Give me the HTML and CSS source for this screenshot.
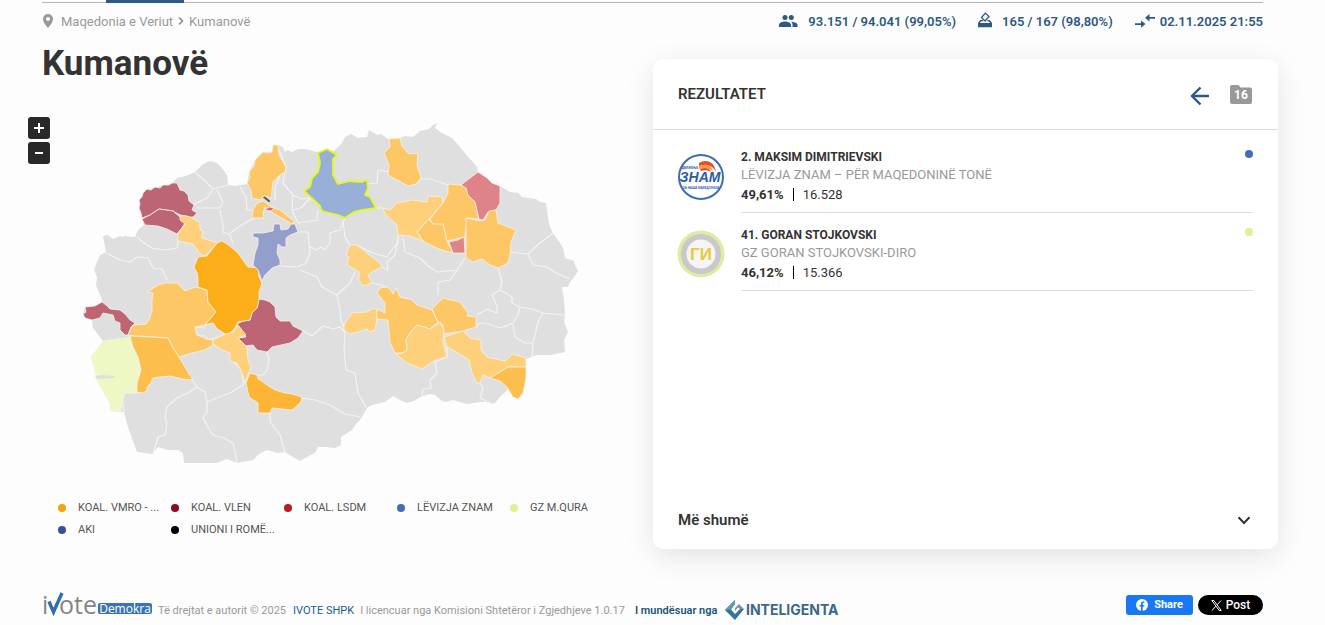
FILE: index.html
```html
<!DOCTYPE html>
<html lang="sq">
<head>
<meta charset="utf-8">
<meta name="viewport" content="width=device-width, initial-scale=1">
<title>Kumanovë</title>
<link rel="stylesheet" href="styles.css">
</head>
<body>
<header class="top">
  <div class="tab-line"><span class="tab-active"></span></div>
  <div class="info">
    <nav class="crumbs">
      <svg class="pin" viewBox="0 0 10 14"><path fill-rule="evenodd" d="M5 0a5 5 0 0 0-5 5c0 3.500 5 9 5 9s5-5.500 5-9a5 5 0 0 0-5-5zm0 3a2 2 0 1 1 0 4 2 2 0 0 1 0-4z"/></svg>
      <a href="#">Maqedonia e Veriut</a>
      <svg class="sep" viewBox="0 0 6 8"><path d="M1 0.500 4.500 4 1 7.500"/></svg>
      <a href="#">Kumanovë</a>
    </nav>
    <ul class="stats">
      <li><svg width="19" height="12" viewBox="0 0 19 12"><g fill="#2c5985"><circle cx="6" cy="2.600" r="2.500"/><circle cx="12.300" cy="2.600" r="2.500"/><path d="M0 12V9.700C0 7.600 4 6.500 6 6.500s6 1.100 6 3.200V12zM13.500 12V9.700c0-1.300-.6-2.200-1.500-3 2.200 0 6.500 1.100 6.500 3V12z"/></g></svg><span>93.151 / 94.041 (99,05%)</span></li>
      <li class="box"><svg width="14" height="16" viewBox="0 0 14 16"><path fill="#2c5985" fill-rule="evenodd" d="M0 11 2.200 8h2.300l1.300 1.300H3.200L2 11h10l-1.200-1.700H8.700L10 8h1.800L14 11v4.200H0z"/><path fill="none" stroke="#2c5985" stroke-width="1.300" d="M7.400 1.100 11 4.500 7 9 3.500 5.500z"/></svg><span>165 / 167 (98,80%)</span></li>
      <li class="time"><svg width="20" height="14" viewBox="0 0 20 14"><path fill="#2c5985" d="M0 9.200h6V6.500L10.500 10 6 13.700V11H0zM20 4.800h-5.500v2.700L10 3.800 14.500 0v2.900H20z"/></svg><span>02.11.2025 21:55</span></li>
    </ul>
  </div>
</header>

<main class="page">
  <section class="map-side">
    <h1>Kumanovë</h1>
    <div class="map-box">
      <div class="zoom">
        <button type="button" aria-label="Zoom in"><svg viewBox="0 0 10 10"><path d="M0 5h10M5 0v10"/></svg></button>
        <button type="button" aria-label="Zoom out"><svg viewBox="0 0 10 10"><path d="M1 5h8"/></svg></button>
      </div>
      <svg class="map" viewBox="28 117 625 350" role="img" aria-label="Maqedonia e Veriut">
        <path class="land" d="M104 242 103 236 108 235 113 239 120 236 122 237 125 236 135 237 138 230 144 225 142 218 140 210 139 200 147 190 155 188 160 186 167 185 172 183 177 178 186 176 195 172 202 165 207 162 211 161 217 163 222 168 227 175 228 185 235 186 247 184 249 172 255 160 263 152 272 152 273 145 278 145 283 147 285 152 287 150 292 152 298 149 305 149 317 152 327 150 334 151 336 149 342 143 345 137 351 134 358 138 367 137 369 130 377 135 381 134 388 139 400 138 405 136 413 137 420 131 429 129 433 125 437 123 435 128 442 133 452 138 460 147 464 152 469 158 472 161 477 167 478 172 487 178 492 183 500 186 510 192 518 193 522 197 528 198 536 199 540 202 546 203 548 218 550 227 553 233 558 240 563 248 565 258 574 261 575 265 578 271 574 277 570 282 568 287 562 287 564 300 565 315 564 322 568 332 564 340 565 352 551 355 537 355 526 359 526 370 523 393 518 399 513 397 508 389 503 394 499 398 495 403 492 404 486 402 480 402 467 404 453 400 446 402 442 401 435 395 430 394 420 397 414 401 407 403 400 400 393 396 385 402 372 405 367 408 360 420 356 424 352 430 341 437 341 445 335 448 325 447 318 447 315 453 307 457 300 461 293 457 285 452 277 453 267 450 259 454 253 460 237 463 227 459 217 463 184 463 183 453 178 450 168 450 158 447 152 454 137 452 128 427 124 412 110 411 110 403 105 395 97 380 94 367 91 357 95 352 103 341 93 328 92 320 85 318 83 314 85 308 95 306 102 302 102 300 96 285 97 277 94 270 97 262 100 255 106 252z"/>
        <g class="border">
          <path d="M104 252 120 260 130 262 137 257 148 258 153 268 162 269 167 280 M137 237 144 243 152 248 165 250 177 248 178 241 M195 172 206 182 213 189 207 198 192 205 M213 189 228 185 M217 190 223 202 220 208 197 208 M220 210 223 225 223 232 230 235 233 243 M230 233 240 226 250 220 254 219 M240 187 246 197 247 210 252 210 M279 150 286 167 283 183 293 195 301 199 310 198 317 203 M280 175 275 188 275 200 M293 195 292 210 298 223 M310 198 301 208 293 210 M298 223 317 220 318 210 M298 232 308 232 310 253 306 263 297 267 280 266 M310 247 317 250 321 247 325 250 330 243 330 233 340 230 345 218 M343 220 345 237 350 245 M357 245 370 252 387 257 393 248 398 243 398 235 M376 208 383 208 M367 184 377 183 378 170 390 172 M416 184 420 179 431 179 442 183 448 185"/>
          <path d="M510 252 519 253 528 254 540 243 553 233 M528 254 533 265 547 267 558 274 570 279 M398 238 395 255 387 262 388 270 382 267 M403 238 405 252 420 258 428 266 437 272 457 270 465 258 M457 270 450 280 438 282 438 295 M498 268 502 282 500 290 492 295 497 306 497 313 487 309 477 315 M500 290 512 297 512 303 520 307 518 315 513 323 500 328 489 324 480 323 476 327 M520 307 532 309 543 313 565 315 M543 313 538 322 533 343 532 358 M513 325 515 337 525 343 533 343 M480 383 483 388 480 398 492 404 M447 347 447 357 435 362 437 373 430 380 431 388 423 389 422 396"/>
          <path d="M300 270 317 277 322 287 337 295 350 283 355 272 M337 295 340 310 341 320 344 327 M303 331 312 336 323 326 333 329 340 327 345 332 344 350 346 370 355 373 358 393 366 407 M302 398 315 400 330 405 345 414 360 417 M372 283 377 284 387 287 M267 352 269 360 267 370 263 375 257 375 M270 413 270 422 280 435 285 452 M245 382 243 385 230 393 219 397 207 402 205 392 197 387 192 380 M197 387 188 393 177 398 167 407 165 418 167 423 165 435 158 437 153 454 M207 402 207 412 203 418 208 427 213 435 224 438 233 443 237 463 M179 357 185 354 M122 393 137 392 M233 362 243 370 243 383 M122 393 124 412"/>
        </g>
        <g class="region">
          <path class="wine" d="M142 218 141 213 139 208 140 204 139 200 142 197 143 193 147 189 151 190 155 187 160 188 163 185 169 185 172 183 177 183 180 190 184 191 188 195 189 201 194 205 192 210 197 213 193 217 187 217 180 215 173 211 159 209 150 215z"/>
          <path class="wine" d="M142 219 150 215 159 209 173 211 180 217 185 223 182 228 177 234 167 229 158 226 145 225z"/>
          <path class="wine" d="M83 314 86 312 85 307 95 306 102 302 106 305 110 309 120 310 125 314 130 320 135 323 131 327 128 335 125 335 120 330 120 323 115 321 113 315 103 313 100 318 92 320 85 318z"/>
          <path class="wine" d="M259 299 265 300 270 302 275 307 276 317 280 321 290 321 293 326 303 331 298 338 290 343 272 347 267 352 257 350 253 345 245 346 238 338 246 337 237 324 243 321 250 320 252 313 257 308z"/>
          <path class="y1" d="M180 215 187 216 192 218 200 223 200 230 203 231 202 238 209 240 217 243 205 256 200 254 193 244 178 241 178 233 185 224 180 220z"/>
          <path class="y2" d="M147 292 152 289 158 285 165 283 177 283 185 291 195 287 207 290 208 302 216 312 205 325 195 327 197 335 207 339 213 340 213 345 205 350 192 353 179 357 173 348 168 338 137 336 128 335 133 325 146 324 150 318 152 310 152 300 153 293z"/>
          <path class="y1" d="M213 340 225 334 233 333 238 325 246 335 238 338 247 347 248 360 251 367 247 377 245 382 242 373 237 363 230 361 230 353 222 350 213 344z"/>
          <path class="orange" d="M222 241 227 244 237 252 248 267 258 268 259 277 262 283 259 292 259 300 257 308 252 313 250 320 238 322 235 328 230 333 225 334 217 329 213 323 205 325 216 312 208 302 207 290 198 287 198 278 197 273 194 267 198 257 207 256 217 243z"/>
          <path class="grey" d="M195 327 205 328 206 325 213 323 217 329 225 334 213 339 207 339 206 336 197 335z"/>
          <path class="green" d="M103 341 125 338 130 337 133 347 138 357 141 370 139 382 137 393 125 393 122 403 121 411 110 411 110 403 105 395 97 380 94 367 91 357 95 352z"/>
          <path class="y3" d="M130 336 168 338 173 348 179 357 185 367 193 380 182 379 170 376 160 377 153 378 151 383 147 387 147 391 142 393 137 392 137 383 141 370 138 357 133 347z"/>
          <path class="orange2" d="M250 373 257 375 258 379 263 382 270 387 275 390 285 393 292 394 302 397 301 402 292 410 282 409 272 408 270 413 258 413 258 403 249 397 246 383z"/>
          <path class="violet" d="M274 224 280 224 281 230 288 229 291 224 295 224 298 232 290 235 286 238 286 247 282 247 278 244 277 253 280 260 280 265 272 268 265 275 262 281 258 270 253 265 255 253 258 245 258 238 253 237 253 233 263 233 273 231z"/>
          <path class="y2" d="M247 183 250 177 249 172 254 166 255 160 263 152 268 153 272 152 273 145 278 145 279 155 282 160 286 167 285 172 280 175 273 182 271 198 265 196 260 200 252 198 251 190z"/>
          <path class="y2" d="M257 203 263 201 272 207 280 210 295 222 292 224 273 213 265 207 263 213 264 218 252 218 253 210z"/>
          <path fill="#de6668" d="M265 210 269 207 274 208 271 211z"/>
          <path fill="#4b6065" d="M262 197 265 196 271 201 269 203z"/>
          <path class="y2" d="M389 139 400 138 402 146 409 154 418 153 417 165 421 178 416 184 408 186 388 175 389 165 384 153 390 147z"/>
          <path class="y1" d="M383 208 390 210 397 203 412 200 427 202 428 196 442 197 443 203 430 218 417 232 423 241 410 236 398 235 397 225 385 214z"/>
          <path class="y2" d="M448 184 460 185 467 187 468 195 475 202 479 219 467 218 465 237 447 241 443 225 433 224 430 219 443 203 448 193z"/>
          <path class="y2" d="M429 219 433 224 443 224 447 241 453 253 442 250 432 246 423 241 417 232z"/>
          <path class="pink" d="M449 242 458 240 464 237 465 253 453 253z"/>
          <path class="pink" d="M461 185 478 172 487 178 492 183 500 186 500 203 496 210 488 212 483 220 479 219 475 202 468 195 466 188z"/>
          <path class="y2" d="M466 218 480 221 485 220 489 211 496 210 498 223 516 230 511 242 510 255 508 263 498 268 490 265 482 259 473 262 466 258z"/>
          <path class="y1" d="M346 255 350 245 357 245 368 254 380 263 382 267 372 272 368 275 372 283 363 286 359 280 359 272 347 265 349 257z"/>
          <path class="y1" d="M344 325 352 313 367 312 372 309 377 309 377 319 375 330 370 332 367 329 358 332 350 334 344 330z"/>
          <path class="y2" d="M377 293 380 288 386 287 390 289 393 294 396 288 400 297 412 300 417 305 432 310 438 322 430 329 417 325 410 333 406 340 407 350 403 353 395 353 390 342 388 320 377 319 377 309 385 313 385 303z"/>
          <path class="y2" d="M432 309 443 298 460 302 468 313 467 316 476 317 476 327 463 331 444 334 443 325 438 322z"/>
          <path class="y1" d="M430 329 417 325 410 333 406 340 407 350 403 353 396 354 407 363 422 369 435 360 447 357 443 342 444 330 440 322z"/>
          <path class="y1" d="M444 337 463 331 470 338 481 340 481 350 487 357 505 361 513 354 526 358 526 368 508 367 490 378 483 375 480 383 477 383 472 373 469 360 458 353 447 347z"/>
          <path class="y3" d="M508 367 526 367 526 378 523 393 518 399 513 397 507 387 500 381 490 378z"/>
        </g>
        <path class="grey" d="M95 376 102 375 115 376 114 378 97 379z"/>
        <path class="chosen" d="M318 153 327 149 337 155 333 159 333 175 338 184 350 181 362 182 367 180 368 188 365 195 370 197 376 208 363 210 354 212 345 218 338 215 322 211 320 206 317 203 304 191 310 187 312 178 318 172 320 163z"/>
      </svg>
    </div>
    <ul class="legend">
      <li><i class="dot d-vmro"></i>KOAL. VMRO - ...</li>
      <li><i class="dot d-vlen"></i>KOAL. VLEN</li>
      <li><i class="dot d-lsdm"></i>KOAL. LSDM</li>
      <li><i class="dot d-znam"></i>LËVIZJA ZNAM</li>
      <li><i class="dot d-qura"></i>GZ M.QURA</li>
      <li><i class="dot d-aki"></i>AKI</li>
      <li><i class="dot d-roma"></i>UNIONI I ROMË...</li>
    </ul>
  </section>

  <section class="card">
    <header class="card-head">
      <h2>REZULTATET</h2>
      <button type="button" class="icon-btn" aria-label="Kthehu"><svg width="20" height="20" viewBox="0 0 20 20"><path fill="none" stroke="#2c5985" stroke-width="2.400" d="M19 10H2M10.500 1.500 2 10l8.500 8.500"/></svg></button>
      <button type="button" class="folder"><svg viewBox="0 0 22 19"><path d="M2 0h6.500l2 2.500H20a2 2 0 0 1 2 2V17a2 2 0 0 1-2 2H2a2 2 0 0 1-2-2V2a2 2 0 0 1 2-2z"/></svg><span>16</span></button>
    </header>
    <ul class="results">
      <li>
        <svg class="party" viewBox="0 0 48 48"><circle cx="24" cy="24" r="22" fill="#fff" stroke="#416cb0" stroke-width="2"/><path fill="#e64b32" d="M22 10c6-4 15-3 17 9-2-5-8-9-17-6z"/><path fill="#f9a33a" d="M22 13c7-3 13-1 14 6-3-4-7-5-14-3z"/><path fill="#e64b32" d="M23 16c5-2 10-1 11 3-3-2-6-2-10-1z"/><text x="23" y="29" text-anchor="middle" class="znam">ЗНАМ</text><text x="24" y="36" text-anchor="middle" class="znam-small">ЗА НАША МАКЕДОНИЈА</text><text x="13" y="16" text-anchor="middle" class="znam-small">ДВИЖЕЊЕ</text></svg>
        <div class="entry">
          <div><h3>2. MAKSIM DIMITRIEVSKI</h3><p class="group">LËVIZJA ZNAM – PËR MAQEDONINË TONË</p><p class="votes"><b>49,61%</b><span>16.528</span></p></div>
          <i class="dot d-znam"></i>
        </div>
      </li>
      <li>
        <svg class="party" viewBox="0 0 48 48"><circle cx="24" cy="24" r="23.500" fill="#dfeaa2"/><circle cx="24" cy="24" r="20" fill="#c9c8cb"/><circle cx="24" cy="24" r="14.500" fill="#f5f5f7"/><text x="24" y="30" text-anchor="middle" class="gi">ГИ</text></svg>
        <div class="entry">
          <div><h3>41. GORAN STOJKOVSKI</h3><p class="group">GZ GORAN STOJKOVSKI-DIRO</p><p class="votes"><b>46,12%</b><span>15.366</span></p></div>
          <i class="dot d-qura"></i>
        </div>
      </li>
    </ul>
    <button type="button" class="more"><span>Më shumë</span><svg width="14" height="9" viewBox="0 0 14 9"><path fill="none" stroke="#333" stroke-width="2" d="M1.500 1.200 7 7l5.500-5.800"/></svg></button>
  </section>
</main>

<footer class="foot">
  <svg class="ivote" width="110" height="32" viewBox="0 0 110 32"><text x="0" y="24" class="iv">i</text><path fill="none" stroke="#2f6cb0" stroke-width="3.400" d="M7 11.500 11.500 22 20 3"/><text x="17" y="24" class="iv">ote</text><rect x="56" y="13" width="54" height="11" rx="2" fill="#3b74b4"/><text x="83" y="23" text-anchor="middle" class="demo">Demokra</text></svg>
  <span class="copy">Të drejtat e autorit © 2025</span>
  <a href="#" class="shpk">IVOTE SHPK</a>
  <span class="copy lic">I licencuar nga Komisioni Shtetëror i Zgjedhjeve 1.0.17</span>
  <span class="power">I mundësuar nga</span>
  <a href="#" class="intel" aria-label="Inteligenta"><svg width="116" height="20" viewBox="0 0 116 20"><path fill="#35749b" d="M10 0v4L6 9.500l4 4.500 5-5h4L10 20 0 10z"/><path fill="#57a0a6" d="M10 0v4L6 9.500 0 10z"/><path fill="#7b95a8" d="M10 8 14 4l5 5h-4l-2-1.500L10 11z"/><text x="21" y="15" class="intel-text">INTELIGENTA</text></svg></a>
  <div class="share">
    <button type="button" class="fb"><svg width="12" height="12" viewBox="0 0 12 12"><circle cx="6" cy="6" r="6" fill="#fff"/><path fill="#1877f2" d="M5 12V7.600H3.500V6H5V4.700C5 3.200 5.900 2.400 7.200 2.400l1.200.1v1.400h-.8c-.7 0-.9.400-.9.900V6h1.600l-.3 1.600H6.700V12z"/></svg>Share</button>
    <button type="button" class="x"><svg width="11" height="11" viewBox="0 0 11 11"><path fill="none" stroke="#fff" d="M.8.500h2L10.200 10.500h-2zM10 .5 6.200 4.700M4.800 6.300 1 10.500"/></svg>Post</button>
  </div>
</footer>
</body>
</html>
```
FILE: styles.css
```css
* { box-sizing: border-box; }
body {
  margin: 0;
  background: #fdfdfd;
  color: #333;
  font-family: Roboto, "Liberation Sans", sans-serif;
  font-size: 13px;
}
h1, h2, h3, p, ul { margin: 0; padding: 0; }
ul { list-style: none; }
a { color: inherit; text-decoration: none; }
button { font: inherit; border: 0; padding: 0; background: none; color: inherit; cursor: pointer; }
svg { display: block; flex: none; }

.top { padding: 0 62px 0 42px; }
.tab-line { height: 3px; border-bottom: 1px solid #b5b5b9; padding-left: 64px; }
.tab-active { display: block; width: 78px; height: 3px; background: #2c5985; }
.info { display: flex; justify-content: space-between; align-items: center; height: 36px; }
.crumbs { display: flex; align-items: center; color: #999; }
.pin { width: 10px; height: 14px; fill: #999; margin: 0 8px 0 1px; }
.sep { width: 6px; height: 8px; margin: 0 5px; fill: none; stroke: #888; stroke-width: 1.5; }
.stats { display: flex; gap: 22px; color: #2c5985; font-weight: 600; }
.stats li { display: flex; align-items: center; gap: 10px; }
.stats .box svg { margin-top: -3px; }
.stats .time { gap: 5px; }

.page { display: grid; grid-template-columns: 1fr 1fr; padding: 20px 47px 0 28px; }
.map-side { margin-top: -18px; }
h1 { font-size: 35px; line-height: 46px; font-weight: 700; padding-left: 14px; }
.map-box { position: relative; margin-top: 30px; }
.map { width: 100%; height: auto; }
.zoom { position: absolute; left: 0; top: 0; display: grid; gap: 3px; }
.zoom button { width: 22px; height: 22px; border-radius: 3px; background: #292929; display: grid; place-items: center; }
.zoom svg { width: 10px; height: 10px; stroke: #fff; stroke-width: 2; }

.land, .grey { fill: #dfdfdf; }
.border { fill: none; stroke: #f3f3f3; stroke-width: 1.2; stroke-linejoin: round; }
.region { stroke: #f6f2e8; stroke-width: 0.8; stroke-linejoin: round; }
.wine { fill: #bd6475; }
.y1 { fill: #fed07c; }
.y2 { fill: #fdc766; }
.y3 { fill: #fcbe4d; }
.orange { fill: #fbad1a; }
.orange2 { fill: #fcb534; }
.green { fill: #edf8c5; }
.violet { fill: #949ecd; }
.pink { fill: #de8388; }
.chosen { fill: #98b0d8; stroke: #e4fa18; stroke-width: 1.8; stroke-linejoin: round; }

.legend { display: grid; grid-template-columns: repeat(5, 113px); margin-top: 30px; padding-left: 30px; font-size: 11px; line-height: 22px; color: #555; }
.legend li { display: flex; align-items: center; gap: 12px; white-space: nowrap; }
.dot { width: 8px; height: 8px; border-radius: 50%; flex: none; }
.d-vmro { background: #f2a60d; }
.d-vlen { background: #8b0a24; }
.d-lsdm { background: #b91c22; }
.d-znam { background: #416cb8; }
.d-qura { background: #dff192; }
.d-aki { background: #3a4f9b; }
.d-roma { background: #000; }

.card { display: flex; flex-direction: column; min-height: 490px; background: #fff; border-radius: 10px; box-shadow: 0 8px 30px rgba(0, 0, 0, 0.1); }
.card-head { display: flex; align-items: center; height: 71px; padding: 0 26px 0 25px; border-bottom: 1px solid #ddd; }
h2 { font-size: 15px; font-weight: 600; flex: 1; }
.icon-btn { padding-top: 3px; }
.folder { position: relative; width: 22px; height: 19px; margin-left: 20px; }
.folder svg { width: 22px; height: 19px; fill: #999; }
.folder span { position: absolute; inset: 3px 0 0; color: #fff; font-size: 12px; line-height: 15px; font-weight: 700; }
.results { flex: 1; padding: 6px 25px 0 24px; }
.results li { display: flex; gap: 16px; }
.party { width: 48px; height: 48px; margin-top: 17px; }
.entry { flex: 1; display: flex; justify-content: space-between; border-bottom: 1px solid #ddd; padding: 12px 0 7px; line-height: 18px; }
.results li + li .entry { padding-top: 13px; }
.entry .dot { margin-top: 2px; }
h3 { font-size: 12px; font-weight: 700; }
.group { color: #999; }
.votes { display: flex; align-items: center; line-height: 21px; }
.votes b { font-weight: 700; }
.votes span { line-height: 13px; margin-left: 9px; padding-left: 9px; border-left: 1px solid #000; }
.znam { font: italic 700 14px "Liberation Sans", sans-serif; fill: #2c5ca5; }
.znam-small { font: 700 3px "Liberation Sans", sans-serif; fill: #2c5ca5; }
.gi { font: 700 17px "Liberation Sans", sans-serif; fill: #e8cb35; }
.more { display: flex; justify-content: space-between; align-items: center; padding: 0 27px 0 25px; height: 58px; font-size: 15px; font-weight: 600; }

.foot { display: flex; align-items: center; padding: 41px 62px 0 42px; font-size: 11px; line-height: 16px; white-space: nowrap; }
.iv { font: 500 25px "Open Sans", sans-serif; fill: #858585; }
.demo { font: 12px "Open Sans", sans-serif; fill: #fff; }
.ivote { overflow: visible; }
.copy { color: #999; margin: 10px 0 0 6px; }
.shpk { color: #1c5c8c; margin: 10px 0 0 7px; }
.power { color: #1c5478; font-weight: 600; margin: 10px 0 0 10px; }
.intel { margin: 8px 0 0 8px; }
.intel-text { font: 700 14px Inter, sans-serif; fill: #3c6884; }
.share { display: flex; gap: 5px; margin: -2px 0 0 auto; color: #fff; }
.share button { display: flex; align-items: center; justify-content: center; height: 20px; }
.fb { width: 67px; gap: 6px; border-radius: 3px; background: #1877f2; font-weight: 700; }
.x { width: 65px; gap: 4px; border-radius: 10px; background: #000; font-size: 12px; font-weight: 500; }
```
